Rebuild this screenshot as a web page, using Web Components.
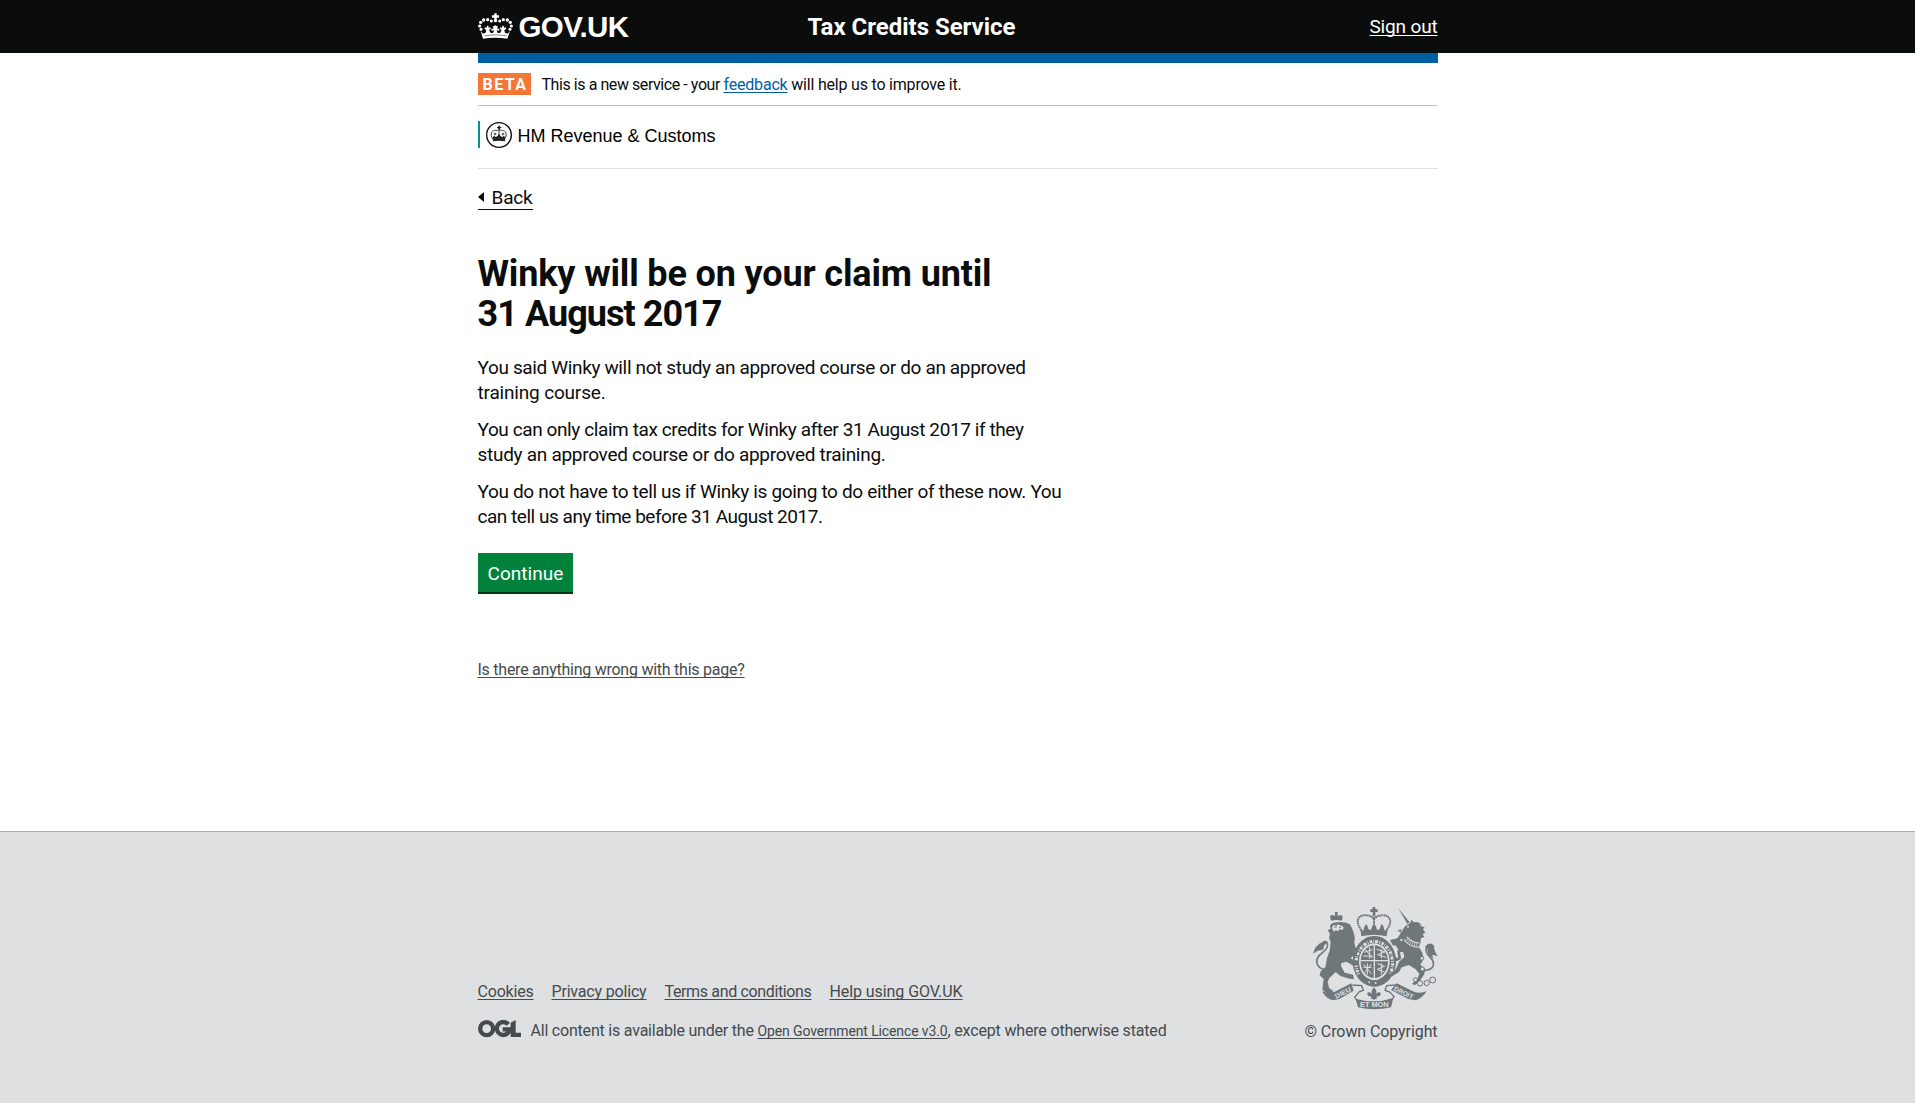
<!DOCTYPE html>
<html lang="en">
<head>
<meta charset="utf-8">
<title>Tax Credits Service</title>
<style>
html,body{margin:0;padding:0}
body{font-family:Roboto,"Noto Sans",sans-serif;color:#0b0c0c;background:#fff;-webkit-font-smoothing:antialiased}
</style>
</head>
<body>
<tax-page></tax-page>
<script>
const define=(name,html)=>customElements.define(name,class extends HTMLElement{
  constructor(){super();this.attachShadow({mode:'open'}).innerHTML=html;}
});

/* A single line of text tracked to a given measure. */
customElements.define('fit-text',class extends HTMLElement{
  constructor(){super();this.attachShadow({mode:'open'}).innerHTML='<style>:host{display:inline-block;flex:none;white-space:pre}:host([u]){text-decoration:underline 1px;text-decoration-skip-ink:none;text-underline-offset:2px}</style><slot></slot>';}
  connectedCallback(){
    this.style.letterSpacing='0px';
    this.style.width='max-content';
    const w=+this.getAttribute('w'),n=this.textContent.length;
    this.style.letterSpacing=((w-this.getBoundingClientRect().width)/n)+'px';
    this.style.width=w+'px';
  }
});

define('crown-mark',`<style>:host{display:block;width:35px;height:26px}svg{display:block}</style>
<svg width="35" height="26" viewBox="24 38 105 78" fill="#fff">
<path d="M73 39h7v6h7v7h-7v8h-7v-8h-7v-7h7z"/>
<circle cx="76.500" cy="61" r="5"/>
<circle cx="64" cy="62" r="4.500"/><circle cx="53" cy="58" r="4.800"/><circle cx="41" cy="59" r="5"/><circle cx="32" cy="66" r="5"/><circle cx="29" cy="77" r="4.800"/><circle cx="33" cy="87" r="4.500"/>
<circle cx="89" cy="62" r="4.500"/><circle cx="100" cy="58" r="4.800"/><circle cx="112" cy="59" r="5"/><circle cx="121" cy="66" r="5"/><circle cx="124" cy="77" r="4.800"/><circle cx="120" cy="87" r="4.500"/>
<path d="M32 92l7 8 8-3 2-8-6-3 2-5 5 1 1-6h4l1 6 5-1 1 5-5 3 5 9 7 0 3-8-8 1v-6l7 0-3-6 8-4 8 4-3 6 7 0v6l-8-1 3 8 7 0 5-9-5-3 1-5 5 1 1-6h4l1 6 5-1 2 5-6 3 2 8 8 3 7-8-8 23q-37-5-73 0z"/>
<path d="M44 106q32-5 66 0" fill="none" stroke="#0b0c0c" stroke-width="1.500"/>
</svg>`);

define('site-header',`<style>
:host{display:block;background:#0b0c0c;color:#fff;height:53px}
.in{width:960px;margin:0 auto;height:53px;display:grid;grid-template-columns:330px 1fr auto;align-items:start}
.logo{display:flex;gap:6px;padding-top:13px}
.logo fit-text{font:bold 29.500px/28px "Liberation Sans",Arial,sans-serif}
.name{font-weight:700;font-size:24px;line-height:30px;padding-top:12px}
.out{font-size:19px;line-height:25px;padding-top:14px}
</style><div class="in"><div class="logo"><crown-mark></crown-mark><fit-text w="110">GOV.UK</fit-text></div>
<div class="name"><fit-text w="208">Tax Credits Service</fit-text></div>
<div class="out"><fit-text u w="68">Sign out</fit-text></div></div>`);

define('beta-banner',`<style>
:host{display:flex;box-sizing:border-box;height:43px;border-bottom:1px solid #bfc1c3;padding-top:10px;font-size:16px;line-height:24px}
b{box-sizing:border-box;width:53px;height:22px;background:#f47738;color:#fff;padding-left:5px;margin-right:11px;font-size:16px;line-height:23px}
a{color:#005ea5}
</style><b><fit-text w="45">BETA</fit-text></b><fit-text w="182">This is a new service - your </fit-text><a><fit-text u w="64">feedback</fit-text></a><fit-text w="174"> will help us to improve it.</fit-text>`);

define('hmrc-bar',`<style>
:host{display:flex;box-sizing:border-box;height:63px;border-bottom:1px solid #dee0e2;padding-top:15px}
.r{display:flex;height:27px;border-left:2px solid #009390;padding-left:6px;gap:6px;font:18px/30px "Liberation Sans",Arial,sans-serif;color:#000}
svg{display:block}
</style><div class="r"><svg width="26" height="27" viewBox="48 63 78 81"><circle cx="87" cy="105" r="37" fill="#fff" stroke="#0b0c0c" stroke-width="4"/>
<g fill="#222"><path d="M85 77h5v4h4v4h-4v6h-5v-6h-4v-4h4z"/><path d="M68 113l4-6 5 4 5-2 5-8 5 8 5 2 5-4 4 6-1 11q-18-4-36 0z"/></g>
<path d="M69 118q-8-10-5-19c3-10 17-9 22-6 5-3 19-4 22 6q3 9-5 19M87 94v12M75 98v8M99 98v8M71 102h8M95 102h8" fill="none" stroke="#333" stroke-width="2.800"/></svg>
<fit-text w="198">HM Revenue &amp; Customs</fit-text></div>`);

define('back-link',`<style>
:host{display:flex;margin-top:16px}
a{display:flex;box-sizing:border-box;width:55px;height:25px;border-bottom:1px solid #0b0c0c;font-size:19px;line-height:25px}
svg{margin:7px 8px 0 0}
</style><a><svg width="6" height="10" viewBox="0 0 6 10"><path d="M6 0v10L0 5z" fill="#0b0c0c"/></svg><fit-text w="41">Back</fit-text></a>`);

define('claim-content',`<style>
:host{display:block;font-size:19px;line-height:25px}
h1,p{display:flex;flex-direction:column;align-items:flex-start}
h1{margin:44px 0 21px;font-size:36px;line-height:40px;font-weight:700}
p{margin:0 0 12px}
p.last{margin-bottom:24px}
button{display:block;margin:0;padding:1px 0 0 10px;width:95px;height:39px;border:0;background:#00823b;box-shadow:0 2px 0 #003618;color:#fff;font:19px/25px Roboto,sans-serif;text-align:left;box-sizing:border-box}
.wrong{font-size:16px;line-height:20px;color:#454a4d;margin-top:68px}
</style><h1><fit-text w="514">Winky will be on your claim until</fit-text><fit-text w="244">31 August 2017</fit-text></h1>
<p><fit-text w="548">You said Winky will not study an approved course or do an approved</fit-text><fit-text w="128">training course.</fit-text></p>
<p><fit-text w="546">You can only claim tax credits for Winky after 31 August 2017 if they</fit-text><fit-text w="408">study an approved course or do approved training.</fit-text></p>
<p class="last"><fit-text w="584">You do not have to tell us if Winky is going to do either of these now. You</fit-text><fit-text w="345">can tell us any time before 31 August 2017.</fit-text></p>
<button><fit-text w="76">Continue</fit-text></button>
<div class="wrong"><fit-text u w="267">Is there anything wrong with this page?</fit-text></div>`);

define('royal-arms',`<style>:host{display:block;width:125px;height:103px}svg{display:block}text{font:bold 20px "Liberation Sans",sans-serif;fill:#dee0e2}</style>
<svg width="125" height="103" viewBox="69 39 375 309" fill="#6f777b">
<!-- crown -->
<path d="M248 39h8v7h7v8h-7v12h-8v-12h-7v-8h7z"/>
<path d="M214 108c-20-26-10-46 14-44 12 0 21 6 24 12 3-6 12-12 24-12 24-2 34 18 14 44M252 68v22" fill="none" stroke="#6f777b" stroke-width="6" stroke-dasharray="5 1.500"/>
<path d="M214 127l-3-22 9 5 4-14 6-6 5 15 7 4 5-13 5-8 5 8 5 13 7-4 5-15 6 6 4 14 9-5-3 22q-38-10-76 0z"/>
<!-- garter and shield -->
<path fill-rule="evenodd" d="M253 126a65 76 0 1 0 .1 0zM253 148a46 55 0 1 1-.1 0z"/>
<ellipse cx="253" cy="203" rx="41" ry="49"/>
<g fill="none" stroke="#dee0e2" stroke-width="4"><path d="M253 153v100M212 200h82"/><path stroke-width="3" d="M222 175l26-8M220 186h28M225 166l22 26M260 166l25 8-22 8 26 8M220 211l24 28M232 208v34M220 220h25M224 236l20-26M262 209l22 8-22 9 22 8M274 165v28M239 160v34M274 208v34"/></g>
<path d="M206 241a55 65 0 1 1 94 0" fill="none" stroke="#dee0e2" stroke-width="9" stroke-dasharray="3 4 7 3 2 4 9 4"/>
<circle cx="238" cy="265" r="3" fill="#dee0e2"/><circle cx="257" cy="267" r="3" fill="#dee0e2"/>
<!-- lion -->
<path d="M124 80q-9-16 3-17l8 3v-12h8v12l8-3q11 1 4 17-15-4-31 0z"/>
<path d="M120 94l8-7q28-8 51 3 8 12 12 26 6 16 2 30l3 14 9 9-5 14-10 2-8 8 8 6 13 3 3 12-16 1-20-12-16 4-1 9 11 20 25 6 3 14-13-2-28-8-14-12-19 18-5 12 4 18 12 8-2 7h-18l-12-10 4-32-12-11 3-12 14-12 5-28 8-22 3-26-5-13 3-12-7-11 9-3z"/>
<path d="M130 93l10 3 3-5 11 4 7 5-3 9-8-4-5 6-8-2-6 4-5-11z" fill="#dee0e2"/><path d="M133 99l7 1M147 99l6 2" stroke="#6f777b" stroke-width="3"/>
<path d="M116 226c-34 4-44-24-28-42 16-15 28-20 24-36q-3-7-13-4" fill="none" stroke="#6f777b" stroke-width="5"/>
<path d="M70 179q3-18 13-25 13-13 30-11l-12 14q3 12-11 12-10 1-20 10z"/>
<!-- unicorn -->
<path d="M325 43l34 42-7 5z"/>
<path d="M334 114l12-18 15-9 3-10 8 8q13-3 21 6l-2 4 13 5-5 6 7 10-8 4 5 10-10 2-2 16-4 12 10 16q7 20-6 36l15 14-4 16-15 22-12 9-9-3 6-7 7-3 9-20-11-14-20-13-22 7-8 14-18 11-21 5 3-8 18-6 11-15 7-18 16-14-3-14-14-6-10-17-6-8 13-12 8-13 4-14-14 6z"/>
<circle cx="354" cy="98" r="3" fill="#dee0e2"/>
<path d="M346 133q18 21 42 20" fill="none" stroke="#dee0e2" stroke-width="16"/><path d="M346 133q18 21 42 20" fill="none" stroke="#6f777b" stroke-width="10" stroke-dasharray="5 2"/>
<path d="M340 148l-8-13-26 6 5 9 18-1 12 13M345 166l-19 6 3 21-8 4-10-9" fill="none" stroke="#6f777b" stroke-width="8"/>
<path d="M402 229c35-1 33-25 19-38-16-16-17-34-2-39" fill="none" stroke="#6f777b" stroke-width="5"/>
<path d="M405 158q15-17 27-3 0 17 12 32l-17-5q0 8 5 13-18-7-20-30z"/>
<g fill="#dee0e2" stroke="#6f777b" stroke-width="3"><circle cx="396" cy="193" r="5.500"/><circle cx="397" cy="225" r="6"/><circle cx="334" cy="138" r="5"/><circle cx="376" cy="257" r="6"/><circle cx="390" cy="268" r="8"/><circle cx="410" cy="267" r="8"/><circle cx="428" cy="258" r="9"/></g>
<!-- motto ribbon -->
<path d="M96 292q20 8 38 1l50-25 7 22-43 25-20 4q-22-6-32-27zM410 292q-20 8-38 1l-52-25-17 20 52 27 22 4q20-6 33-27z"/>
<path d="M187 273l28 2 5 14-14 5M318 273l-28 2-5 14 14 5M208 293l-14 17 10 14M298 293l14 15-10 14" fill="none" stroke="#6f777b" stroke-width="4"/>
<path d="M197 314q57 17 113-2l-7 28q-50 12-99 0z"/>
<path d="M252 279l7 11v9l7-5 7 4-4 8-10 2 3 5-10 4-10-4 3-5-10-2-4-8 7-4 7 5v-9z"/>
<text x="139" y="314" transform="rotate(-27 139 314)" textLength="51" lengthAdjust="spacingAndGlyphs">DIEU</text>
<text x="210" y="338" textLength="86" lengthAdjust="spacingAndGlyphs">ET MON</text>
<text x="310" y="289" transform="rotate(26 310 289)" textLength="62" lengthAdjust="spacingAndGlyphs">DROIT</text>
</svg>`);

define('site-footer',`<style>
:host{display:block;box-sizing:border-box;height:272px;background:#dee0e2;border-top:1px solid #a1acb2;color:#454a4d;font-size:16px;line-height:20px}
.in{width:960px;margin:0 auto;display:flex;justify-content:space-between;padding-top:75px}
nav{display:flex;gap:18px;padding-top:75px}
.lic{display:flex;align-items:baseline;margin-top:19px}
svg{display:block}
.lic svg{margin:-1px 10px 0 0;align-self:flex-start}
.lic .l{font-size:14px}
.arms{display:flex;flex-direction:column;align-items:flex-end}
.arms fit-text{margin-top:12px}
</style><div class="in"><div><nav><fit-text u w="56">Cookies</fit-text><fit-text u w="95">Privacy policy</fit-text><fit-text u w="147">Terms and conditions</fit-text><fit-text u w="133">Help using GOV.UK</fit-text></nav>
<div class="lic"><svg width="43" height="18" viewBox="0 0 129 54"><g fill="none" stroke="#454a4d" stroke-width="13"><circle cx="26" cy="26" r="19.500"/><path d="M91 13a19.500 19.500 0 1 0 3 20v-5H74"/></g><path d="M98 8L113 0v38h16v13H98z" fill="#454a4d"/></svg><fit-text w="227">All content is available under the </fit-text><fit-text class="l" u w="190">Open Government Licence v3.0</fit-text><fit-text w="219">, except where otherwise stated</fit-text></div></div>
<div class="arms"><royal-arms></royal-arms><fit-text w="133">© Crown Copyright</fit-text></div></div>`);

define('tax-page',`<style>
:host{display:flex;flex-direction:column;height:1103px;overflow:hidden}
main{flex:1;width:960px;margin:0 auto}
.bar{height:10px;background:#005ea5}
</style><site-header></site-header><main><div class="bar"></div><beta-banner></beta-banner><hmrc-bar></hmrc-bar><back-link></back-link><claim-content></claim-content></main><site-footer></site-footer>`);
</script>
</body>
</html>
